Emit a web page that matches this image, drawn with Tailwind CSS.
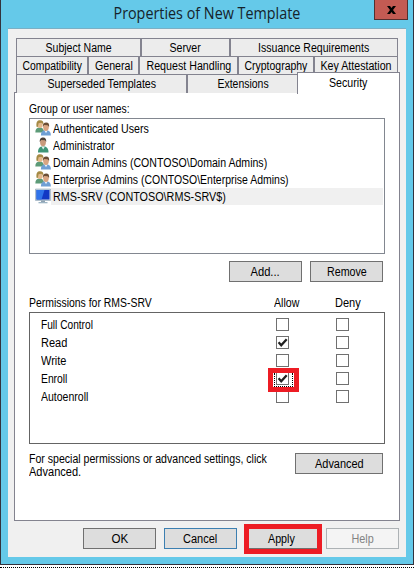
<!DOCTYPE html>
<html lang="en">
<head>
  <meta charset="UTF-8">
  <meta name="viewport" content="width=device-width, initial-scale=1.0">
  <title>Properties of New Template</title>
  <script src="https://cdn.jsdelivr.net/npm/@tailwindcss/browser@4"></script>
</head>
<body class="w-[414px] h-[568px] overflow-hidden bg-white font-['Liberation_Sans',Arial,sans-serif] text-[12.3px] leading-[18px] text-black whitespace-nowrap">
  <svg class="hidden">
    <symbol id="man" viewBox="0 0 16 16">
      <path d="M3 15.500c0-4 1.500-6 5-6.200s5.500 2.200 5.500 6.200z" fill="#3f9678"/>
      <path d="M6.500 9.500l1.700 3 1.800-3z" fill="#e6f2ee"/>
      <ellipse cx="8" cy="5.200" rx="2.900" ry="4" fill="#c99a7c"/>
      <path d="M4.800 5C4.500 1.500 6 .4 8.200.4S11.500 2 11.200 5L10 3.300 6.200 3z" fill="#4d4137"/>
    </symbol>
    <symbol id="group" viewBox="0 0 16 16">
      <path d="M.3 12.500c0-3.500 1.500-5 4.400-5S9 9 9 12.500z" fill="#5d9b78"/>
      <ellipse cx="4.900" cy="4.500" rx="2.800" ry="3.600" fill="#e3b98c"/>
      <path d="M1.500 6.800C1 2 2.300.3 5 .3s3.700 1.500 3.400 4.200L6.500 2.800 3.600 3.200 2.800 7z" fill="#a58a45"/>
      <path d="M5.900 15.500c0-3.600 1.700-5.200 5-5.200s5 1.600 5 5.200z" fill="#6f9fd4"/>
      <path d="M9.500 10.400l1.500 2.800 1.500-2.800z" fill="#eef5fc"/>
      <ellipse cx="11" cy="7.200" rx="2.800" ry="3.700" fill="#d9a582"/>
      <path d="M7.900 7C7.700 3.700 8.900 2.600 11.200 2.600S14.500 4 14.100 7l-1.500-1.700-3.500-.2z" fill="#6b4e35"/>
    </symbol>
    <symbol id="computer" viewBox="0 0 16 16">
      <path d="M.5 1h15v11.500H.5z" fill="#c3d3df" stroke="#8fa4b5" stroke-width=".6"/>
      <path d="M1.500 2h13v9.500h-13z" fill="#1238c4"/>
      <path d="M1.500 2h8l-3 9.500h-5z" fill="#2f73ea"/>
      <path d="M6 12.500h4v1.500H6z" fill="#8ea2b2"/>
      <path d="M3.500 14h9v1.300h-9z" fill="#9db4c4"/>
    </symbol>
    <symbol id="check" viewBox="0 0 13 13">
      <path d="M2.600 6.300L5.200 9.200 10.700 3.200" fill="none" stroke="#222" stroke-width="2.300"/>
    </symbol>
  </svg>

  <!-- dialog window -->
  <div class="w-[414px] h-[565px] bg-[#65c9e9] border-x border-b border-[#33333d] flex flex-col relative">
    <header class="h-7 shrink-0 text-center font-['Open_Sans','Noto_Sans',sans-serif] text-[15.5px] leading-[27px] text-[#15232b]"><span class="inline-block origin-center" data-w="187">Properties of New Template</span></header>
    <button class="absolute right-[5px] top-0 w-[34px] h-5 bg-[#c35b53] border border-t-0 border-[#53302f] flex items-center justify-center">
      <svg width="9" height="8" viewBox="0 0 9 8"><path d="M0 0h3l1.500 2L6 0h3L6 4l3 4H6L4.500 6 3 8H0l3-4z" fill="#000"/></svg>
    </button>

    <main class="mx-[7px] h-[529px] bg-[#f0f0f0] border-t border-[#7bafc4] pt-[9px] pl-[6px] pr-[6px]">
      <!-- tabs -->
      <nav class="mx-[2px] w-[382px] relative [&_span]:border-[#83838f] [&_span]:bg-[#ececec] [&_span]:border-t [&_span]:flex [&_span]:justify-center">
        <div class="grid grid-cols-[125px_89px_168px] h-[18px]">
          <span class="border-x"><b class="font-normal origin-center" data-w="66">Subject Name</b></span>
          <span class="border-x"><b class="font-normal origin-center" data-w="31">Server</b></span>
          <span class="border-x"><b class="font-normal origin-center" data-w="111">Issuance Requirements</b></span>
        </div>
        <div class="grid grid-cols-[72px_51px_99px_76px_84px] h-[18px]">
          <span class="border-x"><b class="font-normal origin-center" data-w="59">Compatibility</b></span>
          <span class="border-x"><b class="font-normal origin-center" data-w="38">General</b></span>
          <span class="border-x"><b class="font-normal origin-center" data-w="85">Request Handling</b></span>
          <span class="border-x"><b class="font-normal origin-center" data-w="63">Cryptography</b></span>
          <span class="border-x"><b class="font-normal origin-center" data-w="71">Key Attestation</b></span>
        </div>
        <div class="grid grid-cols-[171px_111px] h-[18px]">
          <span class="border-x"><b class="font-normal origin-center" data-w="109">Superseded Templates</b></span>
          <span class="border-l"><b class="font-normal origin-center" data-w="51">Extensions</b></span>
        </div>
        <!-- active tab overlaps the panel edge -->
        <p class="absolute left-[281px] top-[34px] w-[103px] h-[22px] bg-white border-t border-x border-[#83838f] leading-[20px] z-10 flex justify-center"><b class="font-normal origin-center" data-w="38">Security</b></p>
      </nav>

      <!-- security panel -->
      <section class="w-[386px] h-[429px] bg-white border border-[#83838f] pl-[14px]">
        <p class="pt-[7px] h-[25px]"><b class="inline-block font-normal origin-left" data-w="101">Group or user names:</b></p>
        <ul class="w-[356px] h-[136px] border border-[#828790] pt-[1px] pr-[1px] pl-[5px] leading-[18px]">
          <li class="flex h-[17px]"><svg class="w-4 h-4"><use href="#group"/></svg><span class="pl-[2px] grow"><b class="inline-block font-normal origin-left" data-w="96">Authenticated Users</b></span></li>
          <li class="flex h-[17px]"><svg class="w-4 h-4"><use href="#man"/></svg><span class="pl-[2px] grow"><b class="inline-block font-normal origin-left" data-w="61">Administrator</b></span></li>
          <li class="flex h-[17px]"><svg class="w-4 h-4"><use href="#group"/></svg><span class="pl-[2px] grow"><b class="inline-block font-normal origin-left" data-w="214">Domain Admins (CONTOSO\Domain Admins)</b></span></li>
          <li class="flex h-[17px]"><svg class="w-4 h-4"><use href="#group"/></svg><span class="pl-[2px] grow"><b class="inline-block font-normal origin-left" data-w="236">Enterprise Admins (CONTOSO\Enterprise Admins)</b></span></li>
          <li class="flex h-[17px]"><svg class="w-4 h-4"><use href="#computer"/></svg><span class="pl-[2px] grow bg-[#f0f0f0]"><b class="inline-block font-normal origin-left" data-w="173">RMS-SRV (CONTOSO\RMS-SRV$)</b></span></li>
        </ul>

        <div class="flex gap-2 pt-[7px] pl-[200px] h-7">
          <button class="w-[73px] h-[21px] bg-[#dddddd] border border-[#707070] leading-[21px]"><b class="inline-block font-normal origin-center" data-w="29">Add...</b></button>
          <button class="w-[73px] h-[21px] bg-[#dddddd] border border-[#707070] leading-[21px]"><b class="inline-block font-normal origin-center" data-w="40">Remove</b></button>
        </div>

        <div class="grid grid-cols-[245px_61px_50px] pt-[12px] h-[30px]">
          <span><b class="inline-block font-normal origin-left" data-w="123">Permissions for RMS-SRV</b></span>
          <span><b class="inline-block font-normal origin-left" data-w="25">Allow</b></span>
          <span><b class="inline-block font-normal origin-left" data-w="26">Deny</b></span>
        </div>
        <div id="perms" class="w-[356px] h-[132px] border border-[#646464] pl-[11px] pt-[3px] relative">
          <div class="absolute left-[238px] top-[55px] w-[31px] h-[24px] border-[5px] border-[#ed1c24] z-10">
            <div class="mx-px h-[14px] w-[19px] border border-t-0 border-dotted border-black"></div>
          </div>
        </div>

        <div class="flex pt-[7px]">
          <p class="w-[266px] pt-[2px] leading-[13px]">
            <b class="inline-block font-normal origin-left" data-w="238">For special permissions or advanced settings, click</b><br>
            <b class="inline-block font-normal origin-left" data-w="52">Advanced.</b>
          </p>
          <button class="mt-[2px] w-[88px] h-[21px] bg-[#dddddd] border border-[#707070] leading-[21px]"><b class="inline-block font-normal origin-center" data-w="49">Advanced</b></button>
        </div>
      </section>

      <footer class="flex gap-2 pt-[7px] pl-[69px] relative">
        <button class="w-[73px] h-[21px] bg-[#dddddd] border border-[#707070] leading-[21px]"><b class="inline-block font-normal origin-center" data-w="17">OK</b></button>
        <button class="w-[73px] h-[21px] bg-[#dddddd] border border-[#3c7fb1] leading-[21px]"><b class="inline-block font-normal origin-center" data-w="34">Cancel</b></button>
        <button class="w-[73px] h-[21px] bg-[#dddddd] border border-[#707070] leading-[21px]"><b class="inline-block font-normal origin-center" data-w="27">Apply</b></button>
        <button class="w-[73px] h-[21px] bg-[#f4f4f4] border border-[#adb2b5] text-[#838383] leading-[21px]"><b class="inline-block font-normal origin-center" data-w="22">Help</b></button>
        <div class="absolute left-[230px] top-[3px] w-[78px] h-[30px] border-[5px] border-[#ed1c24]"></div>
      </footer>
    </main>
  </div>
  <div class="mt-[2px] border-t border-dotted border-black"></div>

  <script>
    const perms = [
      ['Full Control', 52, false],
      ['Read', 26, true],
      ['Write', 25, false],
      ['Enroll', 26, true],
      ['Autoenroll', 47, false]
    ];
    const box = '<i class="block w-[13px] h-[13px] border border-[#707070] mt-[2px]">';
    const table = document.getElementById('perms');
    perms.forEach(([name, width, allow]) => {
      table.insertAdjacentHTML('beforeend', `
        <div class="grid grid-cols-[235px_60px_20px] h-[18px]">
          <span><b class="inline-block font-normal origin-left" data-w="${width}">${name}</b></span>
          ${box}${allow ? '<svg class="-m-px w-[13px] h-[13px]"><use href="#check"/></svg>' : ''}</i>
          ${box}</i>
        </div>`);
    });

    // squeeze every label to its dialog-font width, again whenever its natural size changes
    const fit = el => {
      if (el.offsetWidth) el.style.transform = `scaleX(${el.dataset.w / el.offsetWidth})`;
    };
    const observer = new ResizeObserver(entries => entries.forEach(e => fit(e.target)));
    document.querySelectorAll('[data-w]').forEach(el => observer.observe(el));
    window.addEventListener('load', () => document.querySelectorAll('[data-w]').forEach(fit));
  </script>
</body>
</html>
